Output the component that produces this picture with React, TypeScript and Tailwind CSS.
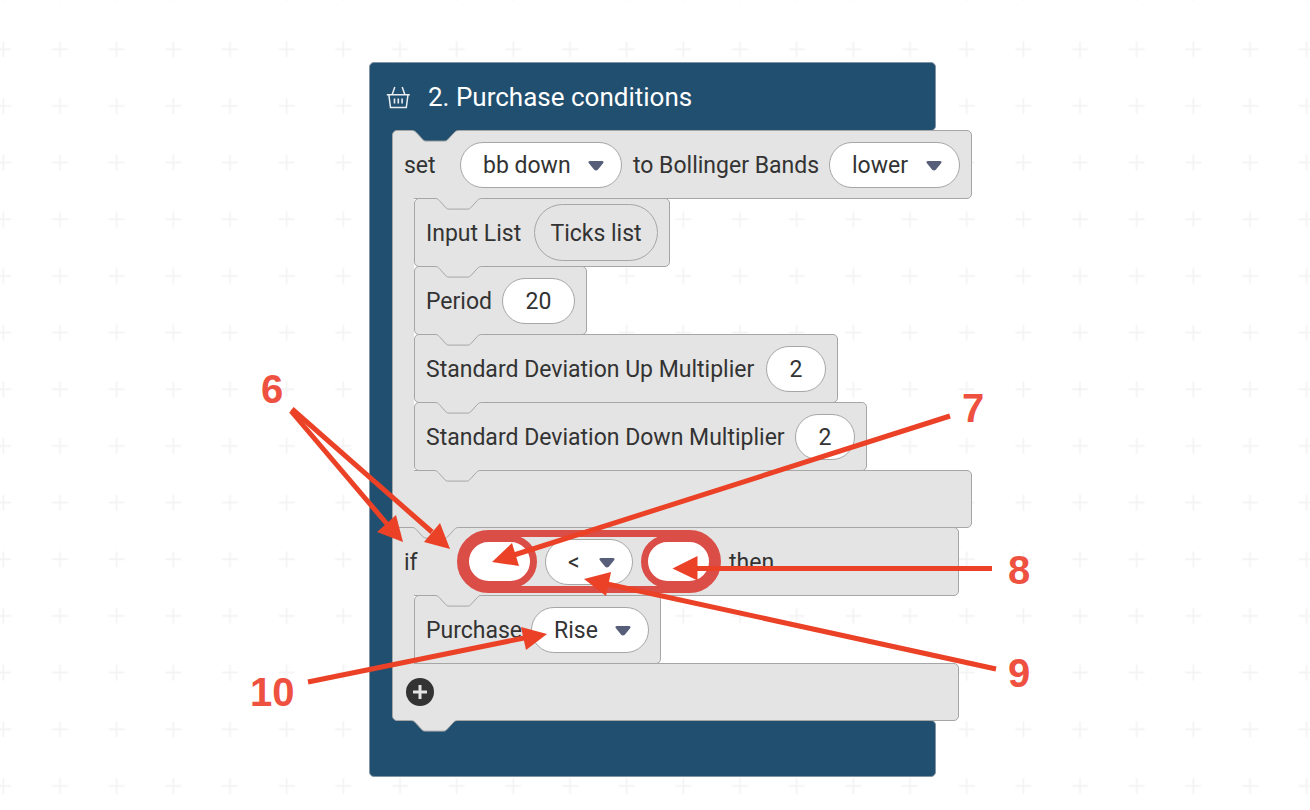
import type { ReactNode } from "react";

const NOTCH = "M0 .5c2 0 3 .7 4.3 2l6 6.6c1 1.2 2 2 3.5 2h19c1.5 0 2.5-.8 3.5-2l6-6.6c1.3-1.3 2.3-2 4.3-2";

function Notch({ className }: { className: string }) {
  return (
    <svg className={`pointer-events-none absolute -top-px z-10 h-3 w-12 ${className}`} viewBox="0 0 48 12" aria-hidden="true">
      <path d={`${NOTCH}V-1H0z`} />
      <path d={NOTCH} fill="none" stroke="#a6a6a6" />
    </svg>
  );
}

function Select({ label, value, options, className }: { label: string; value: string; options: string[]; className: string }) {
  return (
    <span className={`relative shrink-0 ${className}`}>
      <select
        aria-label={label}
        defaultValue={value}
        className="block h-[46px] w-full appearance-none rounded-full border border-[#a6a6a6] bg-white pt-[2px] pl-[22px] text-[#333]"
      >
        {options.map((o) => (
          <option key={o}>{o}</option>
        ))}
      </select>
      <svg className="pointer-events-none absolute top-[18px] right-[18px] h-3 w-4" viewBox="0 0 16 12" aria-hidden="true">
        <path d="M2 1h12c1.600 0 2 1.300 1.100 2.300L9.800 9.700c-1 1-2.600 1-3.600 0L.9 3.300C0 2.300.4 1 2 1z" fill="#575e7a" />
      </svg>
    </span>
  );
}

function NumberField({ label, value, className }: { label: string; value: string; className: string }) {
  return (
    <input
      aria-label={label}
      defaultValue={value}
      className={`h-[46px] shrink-0 rounded-full border border-[#a6a6a6] bg-white pt-[2px] text-center ${className}`}
    />
  );
}

function Socket({ label }: { label: string }) {
  return <input aria-label={label} className="-mx-[2px] h-[53px] w-[75px] shrink-0 rounded-full border-[7px] border-[#da4e47] bg-white px-3" />;
}

function Row({ children }: { children: ReactNode }) {
  return (
    <div className="relative -mb-px flex h-[69px] w-fit items-center gap-[11px] rounded-[5px] border border-[#a6a6a6] bg-[#e4e4e4] px-[11px] whitespace-nowrap">
      <Notch className="left-5 fill-[#e4e4e4]" />
      {children}
    </div>
  );
}

function Label({ children, className = "" }: { children: ReactNode; className?: string }) {
  return <span className={`pt-[2px] ${className}`}>{children}</span>;
}

type StatementProps = {
  head: ReactNode;
  rows: ReactNode;
  foot: ReactNode;
  headClass: string;
  footClass: string;
  notchClass: string;
};

function Statement({ head, rows, foot, headClass, footClass, notchClass }: StatementProps) {
  return (
    <section className="-mb-px">
      <div
        className={`relative flex h-[69px] items-center gap-[11px] rounded-[5px] rounded-bl-none border border-[#a6a6a6] bg-[#e4e4e4] px-[11px] whitespace-nowrap ${headClass}`}
      >
        <Notch className={`left-[19px] ${notchClass}`} />
        {head}
      </div>
      <div className="relative z-10 -mt-px flex">
        <div className="-mb-px w-[22px] border-l border-[#a6a6a6] bg-[#e4e4e4]" />
        <div className="pb-px">{rows}</div>
      </div>
      <div className={`relative -mt-px flex items-center rounded-[5px] rounded-tl-none border border-[#a6a6a6] bg-[#e4e4e4] px-[13px] ${footClass}`}>
        {foot}
      </div>
    </section>
  );
}

function BasketIcon() {
  return (
    <svg className="h-6 w-6" viewBox="0 0 24 24" fill="none" stroke="#e9eef2" strokeWidth="1.500" aria-hidden="true">
      <path d="M.8 9.700h23M2.800 9.700l1.700 12.800h15.800l1.700-12.800M6.200 9.500L8.800 2M18.800 9.500L16.200 2" />
      <path d="M8.500 13.500v5M12.300 13.500v5M16.100 13.500v5" strokeWidth="1.600" />
    </svg>
  );
}

const ARROWS = [
  { from: [291, 411], to: [387, 524], head: "403,542 377,532 396,515" },
  { from: [292, 409], to: [432, 532], head: "450,549 424,542 440,523" },
  { from: [950, 416], to: [514, 555], head: "492,562 512,543 519,566" },
  { from: [992, 568.5], to: [696, 568.5], head: "672.500,568.500 697.500,556 697.500,580.500" },
  { from: [996, 669], to: [607, 584], head: "584,579 611,572 606,596" },
  { from: [308, 682], to: [524, 638], head: "547,634 521,627 526,650" },
];

const CALLOUTS = [
  { text: "6", place: "left-[261px] top-[366px]" },
  { text: "7", place: "left-[962px] top-[385px]" },
  { text: "8", place: "left-[1008px] top-[547px]" },
  { text: "9", place: "left-[1008px] top-[650px]" },
  { text: "10", place: "left-[250px] top-[669px]" },
];

function Annotations() {
  return (
    <div className="pointer-events-none absolute inset-0 z-30 font-['Liberation_Sans',sans-serif] text-[40px] leading-[46px] font-bold text-[#ee513f]">
      <svg className="absolute top-0 left-0 h-full w-full" aria-hidden="true">
        {ARROWS.map((a) => (
          <g key={a.head} fill="#eb4126" stroke="#eb4126">
            <line x1={a.from[0]} y1={a.from[1]} x2={a.to[0]} y2={a.to[1]} strokeWidth="5" />
            <polygon points={a.head} stroke="none" />
          </g>
        ))}
      </svg>
      {CALLOUTS.map((c) => (
        <span key={c.text} className={`absolute ${c.place}`}>
          {c.text}
        </span>
      ))}
    </div>
  );
}

function GridBackground() {
  return (
    <svg className="absolute inset-0 h-full w-full" aria-hidden="true">
      <defs>
        <pattern id="grid" width="56.670" height="56.670" patternUnits="userSpaceOnUse" x="-25" y="21">
          <path d="M20.300 28.300h16M28.300 20.300v16" stroke="#f3f3f3" strokeWidth="1.800" />
        </pattern>
      </defs>
      <rect width="100%" height="100%" fill="url(#grid)" />
    </svg>
  );
}

export default function App() {
  return (
    <main className="relative min-h-screen overflow-hidden bg-white pt-[62px] pb-8 pl-[369px] font-['Roboto',sans-serif] text-[23px] leading-7 text-[#333]">
      <GridBackground />
      <article className="relative">
        <header className="flex h-[69px] w-[567px] items-center gap-[18px] rounded-[5px] rounded-bl-none border border-[#8395a3] bg-[#214f70] pl-4">
          <BasketIcon />
          <h1 className="text-[26px] text-white">2. Purchase conditions</h1>
        </header>
        <div className="relative z-20 -mt-px flex">
          <div className="-mr-[5px] -mb-px w-7 border-l border-[#8395a3] bg-[#214f70]" />
          <div className="relative pb-px">
            <Statement
              notchClass="fill-[#214f70]"
              headClass="w-fit"
              footClass="h-[58px]"
              head={
                <>
                  <Label className="w-[45px]">set</Label>
                  <Select label="Variable" value="bb down" options={["bb down", "bb up"]} className="w-[162px]" />
                  <Label className="w-[185px]">to Bollinger Bands</Label>
                  <Select label="Band" value="lower" options={["upper", "middle", "lower"]} className="w-[131px]" />
                </>
              }
              rows={
                <>
                  <Row>
                    <Label className="w-[97px]">Input List</Label>
                    <span className="flex h-[57px] w-[124px] items-center justify-center rounded-full border border-[#a6a6a6]">
                      <Label>Ticks list</Label>
                    </span>
                  </Row>
                  <Row>
                    <Label className="w-[65px]">Period</Label>
                    <NumberField label="Period" value="20" className="w-[73px]" />
                  </Row>
                  <Row>
                    <Label className="w-[329px]">Standard Deviation Up Multiplier</Label>
                    <NumberField label="Standard Deviation Up Multiplier" value="2" className="w-[60px]" />
                  </Row>
                  <Row>
                    <Label className="w-[358px]">Standard Deviation Down Multiplier</Label>
                    <NumberField label="Standard Deviation Down Multiplier" value="2" className="w-[60px]" />
                  </Row>
                </>
              }
              foot={<Notch className="left-[41px] z-20 fill-[#e4e4e4]" />}
            />
            <Statement
              notchClass="fill-[#e4e4e4]"
              headClass="w-[567px]"
              footClass="h-[58px] w-[567px]"
              head={
                <>
                  <Label className="w-[45px]">if</Label>
                  <span className="-mx-[3px] flex h-[63px] w-[264px] items-center justify-between rounded-full border-[7px] border-[#da4e47]">
                    <Socket label="Left operand" />
                    <Select label="Comparison" value="<" options={["=", "≠", "<", "≤", ">", "≥"]} className="w-[88px]" />
                    <Socket label="Right operand" />
                  </span>
                  <Label>then</Label>
                </>
              }
              rows={
                <Row>
                  <Label className="w-[94px]">Purchase</Label>
                  <Select label="Contract type" value="Rise" options={["Rise", "Fall"]} className="w-[118px]" />
                </Row>
              }
              foot={
                <button type="button" aria-label="Add condition">
                  <svg className="h-7 w-7" viewBox="0 0 28 28" aria-hidden="true">
                    <circle cx="14" cy="14" r="14" fill="#333" />
                    <path d="M7 14h14M14 7v14" stroke="#e4e4e4" strokeWidth="3" />
                  </svg>
                </button>
              }
            />
          </div>
        </div>
        <footer className="relative -mt-px h-[57px] w-[567px] rounded-[5px] rounded-tl-none border border-[#8395a3] bg-[#214f70]" />
        <div className="relative z-20 -mt-[56px] h-[56px]">
          <Notch className="left-[42px] fill-[#e4e4e4]" />
        </div>
      </article>
      <Annotations />
    </main>
  );
}
